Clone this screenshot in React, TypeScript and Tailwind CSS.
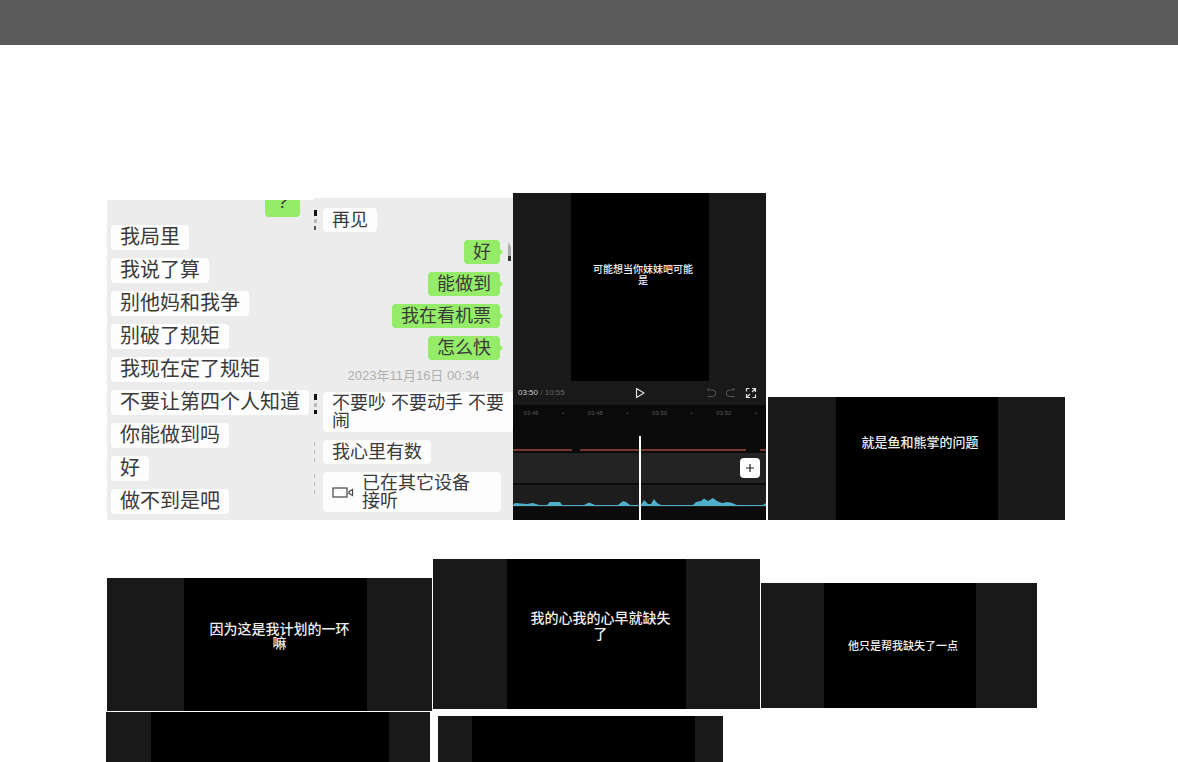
import type { ReactNode } from 'react';
import clsx from 'clsx';

type Message = {
  id: number;
  text: string;
};

const receivedMessages: Message[] = [
  { id: 1, text: '我局里' },
  { id: 2, text: '我说了算' },
  { id: 3, text: '别他妈和我争' },
  { id: 4, text: '别破了规矩' },
  { id: 5, text: '我现在定了规矩' },
  { id: 6, text: '不要让第四个人知道' },
  { id: 7, text: '你能做到吗' },
  { id: 8, text: '好' },
  { id: 9, text: '做不到是吧' }
];

const sentMessages: Message[] = [
  { id: 1, text: '好' },
  { id: 2, text: '能做到' },
  { id: 3, text: '我在看机票' },
  { id: 4, text: '怎么快' }
];

const ticks = ['03:46', '•', '03:48', '•', '03:50', '•', '03:52', '•'];

const LeftChat = () => (
  <section className="flex flex-col items-start gap-2 overflow-hidden bg-[#ececec] pb-1.5 pl-1 text-xl leading-[25px] text-[#3a3a3a]">
    <div className="mr-3.5 flex h-[17px] items-end self-end overflow-hidden rounded-b-sm bg-[#95ec69] px-3 pb-1">
      <span className="leading-6">?</span>
    </div>
    {receivedMessages.map((message) => (
      <p key={message.id} className="whitespace-nowrap rounded-sm bg-[#fdfdfd] px-[9px]">
        {message.text}
      </p>
    ))}
  </section>
);

type ReceivedProps = {
  avatar: 'dark' | 'split' | 'faint';
  className?: string;
  children: ReactNode;
};

const Received = ({ avatar, className, children }: ReceivedProps) => (
  <div className="flex gap-1.5">
    <div className="flex h-6 w-[3px] shrink-0 flex-col justify-between py-0.5">
      <span className={clsx(avatar === 'faint' ? 'h-1 w-px bg-[#bbb]' : 'h-1.5 w-full bg-[#111]')} />
      <span className={clsx('h-1', avatar === 'faint' ? 'w-px bg-[#bbb]' : 'w-full bg-[#bbb]')} />
      <span
        className={clsx(
          'h-1',
          avatar === 'split' && 'w-full bg-[#111]',
          avatar === 'dark' && 'w-0.5 bg-[#555]',
          avatar === 'faint' && 'w-px bg-[#bbb]'
        )}
      />
    </div>
    <div className={clsx('rounded-sm bg-[#fdfdfd] pl-[9px]', className)}>{children}</div>
  </div>
);

const RightChat = () => (
  <section className="flex flex-col gap-2 overflow-hidden bg-[#ececec] pb-2 pt-2.5 text-lg leading-6 text-[#3a3a3a]">
    <Received avatar="dark" className="pr-[9px]">
      再见
    </Received>
    {sentMessages.map((message, index) => (
      <div key={message.id} className="flex items-center justify-end pr-0.5">
        <p className="whitespace-nowrap rounded-sm bg-[#95ec69] px-[9px]">{message.text}</p>
        <svg className="h-2 w-1" viewBox="0 0 4 8" fill="#95ec69">
          <path d="M0 1 L3 4 L0 7 Z" />
        </svg>
        <span className="flex h-5 w-[7px] items-end justify-end">
          {index === 0 && (
            <svg className="h-5 w-[3px]" viewBox="0 0 3 20">
              <path d="M0 4 L1 0 L3 6 V14 H0 Z" fill="#aaa" />
              <rect y="14" width="3" height="5" fill="#333" />
            </svg>
          )}
        </span>
      </div>
    ))}
    <time className="whitespace-nowrap text-center text-[13px] leading-4 text-[#b0b0b0]">2023年11月16日 00:34</time>
    <Received avatar="split" className="grow whitespace-nowrap py-0.5 leading-[18px]">
      不要吵 不要动手 不要
      <br />闹
    </Received>
    <Received avatar="faint" className="pr-[9px]">
      我心里有数
    </Received>
    <Received avatar="faint" className="mr-3 flex grow items-center gap-2 whitespace-nowrap py-0.5 leading-[18px]">
      <svg className="h-3 w-[22px]" viewBox="0 0 22 12" fill="none" stroke="#444" strokeWidth="1.2">
        <rect x="1" y="2" width="14" height="9" />
        <path d="M17 5.5 L20.5 3.5 V9.5 L17 7.5 Z" />
      </svg>
      <p>
        已在其它设备
        <br />
        接听
      </p>
    </Received>
  </section>
);

const Editor = () => (
  <section className="flex flex-col overflow-hidden bg-[#191919] text-[#888]">
    <div className="flex">
      <div className="flex-[58]" />
      <div className="flex-[138] bg-black">
        <p className="whitespace-nowrap pb-[95px] pl-1.5 pt-[71px] text-center text-[10px] font-medium leading-[11px] text-[#eee]">
          可能想当你妹妹吧可能
          <br />是
        </p>
      </div>
      <div className="flex-[57]" />
    </div>

    {/* Playback controls */}
    <div className="grid grid-cols-3 items-center px-[5px]">
      <p className="text-[8px] leading-6 text-[#666]">
        <span className="text-[#ccc]">03:50</span> / 10:55
      </p>
      <button aria-label="Play" className="justify-self-center">
        <svg className="size-3" viewBox="0 0 12 12" fill="none" stroke="#ddd" strokeWidth="1.2" strokeLinejoin="round">
          <path d="M2.5 1.5 L10 6 L2.5 10.5 Z" />
        </svg>
      </button>
      <div className="flex items-center justify-end gap-2 pr-1">
        <button aria-label="Undo">
          <svg className="size-3" viewBox="0 0 12 12" fill="none" stroke="#555">
            <path d="M4 1 L2 3 H7.5 A3.2 3.2 0 0 1 7.5 9.5 H2.5" />
          </svg>
        </button>
        <button aria-label="Redo">
          <svg className="size-3" viewBox="0 0 12 12" fill="none" stroke="#555">
            <path d="M8 1 L10 3 H4.5 A3.2 3.2 0 0 0 4.5 9.5 H9.5" />
          </svg>
        </button>
        <button aria-label="Full screen">
          <svg className="size-3" viewBox="0 0 12 12" fill="none" stroke="#ddd" strokeWidth="1.2">
            <path d="M1.5 4.5 V1.5 H4.5 M7 1.5 H10.5 V5 M10.5 7.5 V10.5 H7.5 M5 10.5 H1.5 V7 M10.5 1.5 L7 5 M1.5 10.5 L5 7" />
          </svg>
        </button>
      </div>
    </div>

    {/* Timeline */}
    <div className="relative bg-[#0b0b0b]">
      <div className="-mr-1.5 flex pb-[30px] pl-0.5 pt-0.5 text-[6px] leading-3 text-[#5a5a5a]">
        {ticks.map((tick, index) => (
          <span key={index} className={clsx('flex-1 text-center', index % 2 === 1 && 'text-[5px]')}>
            {tick}
          </span>
        ))}
      </div>
      <div className="flex h-0.5">
        <span className="flex-[59] bg-[#7a3730]" />
        <span className="flex-[8]" />
        <span className="flex-[166] bg-[#7a3730]" />
        <span className="flex-[14]" />
        <span className="flex-[6] bg-[#7a3730]" />
      </div>
      <div className="mt-0.5 flex justify-end bg-[#232323] py-[5px] pr-1.5">
        <button aria-label="Add clip" className="flex size-5 items-center justify-center rounded-sm bg-white">
          <svg className="size-2.5" viewBox="0 0 10 10" stroke="#222" strokeWidth="1.2">
            <path d="M5 1 V9 M1 5 H9" />
          </svg>
        </button>
      </div>
      <svg className="mt-0.5 block h-[22px] w-full bg-[#1d1d1d]" viewBox="0 0 253 22" preserveAspectRatio="none">
        <path
          fill="#4fb0cc"
          d="M0 20 L2 18 L14 19 L20 18 L26 20 H34 L37 17 L47 17 L49 20 H71 L76 17.5 L82 20 H105 L110 16 L113 17 L117 20 H128 L131 15 L135 19 H138 L141 14 L144 18 L148 20 H180 L183 17 L188 16 L191 13.5 L195 16 L200 13 L204 16 L209 18 L215 17 L219 18 L224 20 H250 L253 18 V21 H0 Z"
        />
      </svg>
      <div className="h-[13px]" />
      <div className="absolute bottom-0 left-1/2 top-[31px] w-0.5 -translate-x-px bg-white" />
    </div>
  </section>
);

type ClipProps = {
  className?: string;
  left: string;
  center: string;
  right: string;
  caption?: string;
  children?: ReactNode;
};

const Clip = ({ className, left, center, right, caption, children }: ClipProps) => (
  <figure className={clsx('flex bg-[#191919]', className)}>
    <div className={left} />
    <div className={clsx('bg-black', center)}>
      {children && (
        <figcaption className={clsx('whitespace-nowrap text-center font-medium text-[#eee]', caption)}>
          {children}
        </figcaption>
      )}
    </div>
    <div className={right} />
  </figure>
);

const App = () => {
  return (
    <div className="flex min-h-screen flex-col bg-[#fefefe] font-['Liberation_Sans','Noto_Sans_CJK_SC',sans-serif]">
      <header className="h-[45px] bg-[#5a5a5a]" />

      <main className="flex grow flex-col pt-[148px]">
        <div className="grid grid-cols-[207fr_199fr_253fr_299fr] items-end pl-[107px] pr-[113px]">
          <LeftChat />
          <RightChat />
          <Editor />
          <Clip
            className="ml-0.5"
            left="flex-[68]"
            center="flex-[162]"
            right="flex-[67]"
            caption="pb-[67px] pl-1.5 pt-9 text-[13px] leading-5"
          >
            就是鱼和熊掌的问题
          </Clip>
        </div>

        <div className="mt-[39px] grid grid-cols-[325fr_327fr_276fr] items-start gap-x-px pl-[107px] pr-[141px]">
          <Clip
            className="mt-[19px]"
            left="flex-[77]"
            center="flex-[183]"
            right="flex-[65]"
            caption="pb-[61px] pl-2 pt-11 text-sm leading-[14px]"
          >
            因为这是我计划的一环
            <br />嘛
          </Clip>
          <Clip
            left="flex-[74]"
            center="flex-[178]"
            right="flex-[74]"
            caption="pb-[67px] pl-2 pt-[51px] text-sm leading-4"
          >
            我的心我的心早就缺失
            <br />了
          </Clip>
          <Clip
            className="mt-6"
            left="flex-[63]"
            center="flex-[152]"
            right="flex-[61]"
            caption="pb-[54px] pl-1.5 pt-[55px] text-[11px] leading-4"
          >
            他只是帮我缺失了一点
          </Clip>
        </div>

        <div className="mt-px grid grow grid-cols-[324fr_285fr] gap-x-2 pl-[106px] pr-[455px]">
          <Clip left="flex-[45]" center="flex-[238]" right="flex-[41]" />
          <Clip className="mt-1" left="flex-[34]" center="flex-[223]" right="flex-[28]" />
        </div>
      </main>
    </div>
  );
};

export default App;
